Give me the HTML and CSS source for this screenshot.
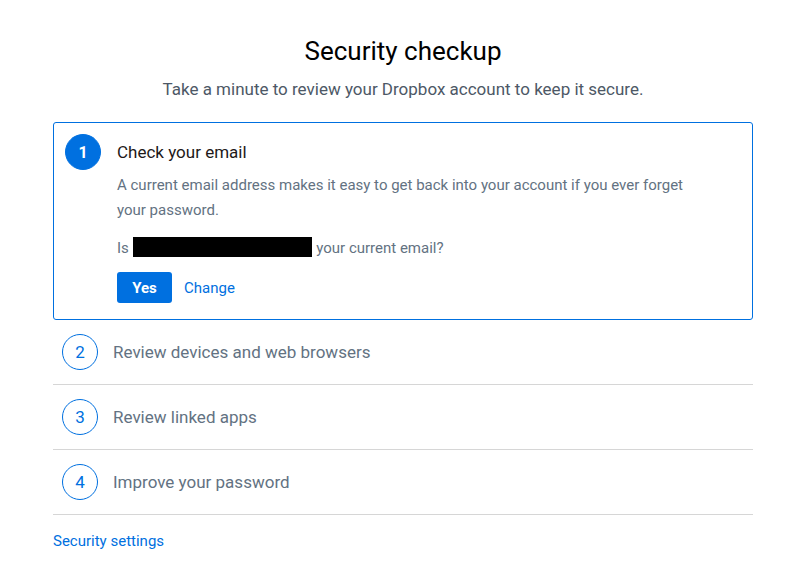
FILE: index.html
```html
<!DOCTYPE html>
<html>
<head>
<meta charset="utf-8">
<link rel="stylesheet" href="styles.css">
</head>
<body>
<div class="page">
  <h1 class="title">Security checkup</h1>
  <p class="subtitle">Take a minute to review your Dropbox account to keep it secure.</p>
  <div class="card">
    <div class="step-num filled">1</div>
    <div class="card-body">
      <div class="card-title">Check your email</div>
      <p class="desc first">A current email address makes it easy to get back into your account if you ever forget your password.</p>
      <p class="desc email-line">Is <span class="redact"></span> your current email?</p>
      <div class="actions">
        <button class="btn">Yes</button>
        <a class="link" href="#">Change</a>
      </div>
    </div>
  </div>
  <div class="row"><div class="step-num">2</div><span class="row-text">Review devices and web browsers</span></div>
  <div class="row"><div class="step-num">3</div><span class="row-text">Review linked apps</span></div>
  <div class="row"><div class="step-num">4</div><span class="row-text">Improve your password</span></div>
  <a class="link settings" href="#">Security settings</a>
</div>
</body>
</html>
```
FILE: styles.css
```css
html, body { margin: 0; padding: 0; background: #fff; }
body { font-family: Roboto, "Liberation Sans", Arial, sans-serif; color: #1e1919; }
.page { width: 700px; margin-left: 53px; padding-top: 35px; }
.title { font-size: 26px; font-weight: 400; text-align: center; margin: 0; line-height: 32px; color: #000; }
.subtitle { font-size: 17px; text-align: center; color: #4d5866; margin: 10px 0 0; line-height: 24px; }
.card { margin-top: 21px; border: 1px solid #0070e0; border-radius: 3px; padding: 11px 11px 16px; display: flex; gap: 16px; }
.step-num { width: 34px; height: 34px; border: 1px solid #0070e0; border-radius: 50%; color: #0070e0; display: flex; align-items: center; justify-content: center; font-size: 17px; flex: none; }
.step-num.filled { background: #0070e0; color: #fff; font-weight: 700; font-size: 16px; }
.card-body { flex: 1; }
.card-title { font-size: 17px; line-height: 36px; color: #1e1919; }
.desc { font-size: 15px; color: #637282; line-height: 25px; margin: 0; max-width: 570px; }
.desc.first { margin-top: 3px; }
.email-line { margin-top: 13px; }
.redact { display: inline-block; width: 179px; height: 20px; background: #000; vertical-align: -4px; margin: 0 1px 0 0; }
.actions { display: flex; align-items: center; gap: 12px; margin-top: 11px; }
.btn { background: #0070e0; color: #fff; border: none; border-radius: 3px; font-family: inherit; font-weight: 700; font-size: 15px; width: 55px; height: 31px; padding: 0; }
.link { color: #0070e0; text-decoration: none; font-size: 15px; }
.row { display: flex; align-items: center; gap: 15px; padding: 14px 9px; border-bottom: 1px solid #d6d6d6; }
.row-text { font-size: 17px; color: #637282; }
.settings { display: inline-block; margin-top: 17px; }
```
